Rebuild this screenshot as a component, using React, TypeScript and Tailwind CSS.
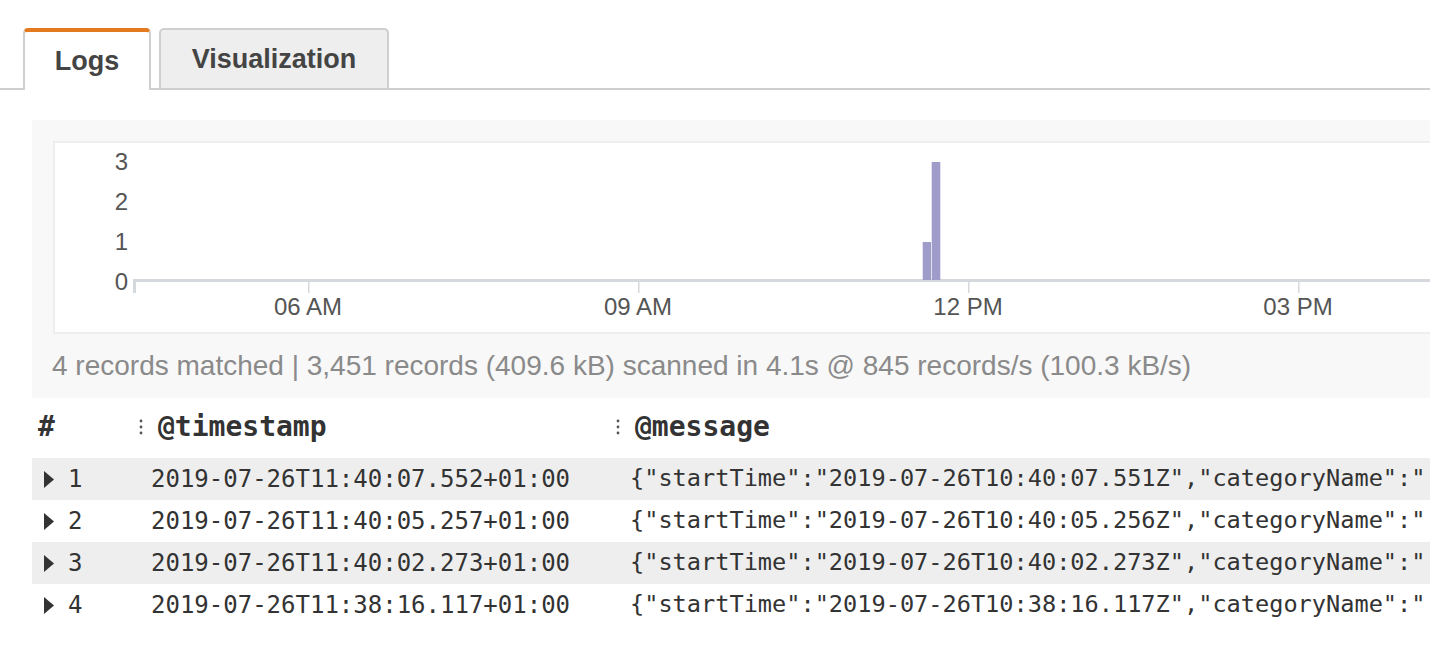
import React from "react";

const rows = [
  { n: 1, ts: "2019-07-26T11:40:07.552+01:00", st: "2019-07-26T10:40:07.551Z" },
  { n: 2, ts: "2019-07-26T11:40:05.257+01:00", st: "2019-07-26T10:40:05.256Z" },
  { n: 3, ts: "2019-07-26T11:40:02.273+01:00", st: "2019-07-26T10:40:02.273Z" },
  { n: 4, ts: "2019-07-26T11:38:16.117+01:00", st: "2019-07-26T10:38:16.117Z" },
];

const ticks = [
  { x: 253, label: "06 AM" },
  { x: 583, label: "09 AM" },
  { x: 913, label: "12 PM" },
  { x: 1243, label: "03 PM" },
];

const Histogram = () => (
  <svg width="1400" height="190" className="block" style={{ fontFamily: '"Liberation Sans", Arial, sans-serif' }}>
    {["3", "2", "1", "0"].map((t, i) => (
      <text key={t} x="73" y={27 + i * 40} textAnchor="end" fontSize="24" fill="#555">
        {t}
      </text>
    ))}
    <rect x="78" y="136" width="1320" height="3" fill="#d5d8dc" />
    <rect x="78" y="136" width="3" height="14" fill="#d5d8dc" />
    {ticks.map((t) => (
      <g key={t.label}>
        <rect x={t.x} y="139" width="1.5" height="11" fill="#d5d8dc" />
        <text x={t.x} y="172" textAnchor="middle" fontSize="24" fill="#555">
          {t.label}
        </text>
      </g>
    ))}
    <rect x="867.7" y="99" width="8.3" height="38" fill="#a09cc9" />
    <rect x="876.7" y="19" width="8.6" height="118" fill="#a09cc9" />
  </svg>
);

const ColGrip = () => (
  <svg width="19" height="20" viewBox="0 0 19 20" className="shrink-0">
    <circle cx="2" cy="4" r="1.4" fill="#555" />
    <circle cx="2" cy="10" r="1.4" fill="#555" />
    <circle cx="2" cy="16" r="1.4" fill="#555" />
  </svg>
);

export default function App() {
  return (
    <div className="w-[1430px] h-[648px] bg-white overflow-hidden" style={{ fontFamily: '"Liberation Sans", Arial, sans-serif' }}>
      {/* tabs */}
      <div className="pt-[28px] pl-[23px] flex items-end border-b-2 border-[#cfcfcf] h-[90px]">
        <div className="w-[128px] h-[62px] -mb-[2px] bg-white border-x-2 border-[#cfcfcf] border-t-[4px] border-t-[#e37a1f] rounded-t-[5px] flex items-center justify-center text-[27px] font-bold text-[#444]">
          Logs
        </div>
        <div className="ml-[8px] w-[230px] h-[60px] bg-[#eeeeee] border-2 border-b-0 border-[#cfcfcf] rounded-t-[5px] flex items-center justify-center text-[27px] font-bold text-[#444]">
          Visualization
        </div>
      </div>

      {/* results panel */}
      <div className="ml-[32px] mt-[30px] bg-[#f8f8f8] pt-[21px] pl-[21px] h-[278px]">
        <div className="h-[193px] bg-white border-2 border-[#eeeeee] border-r-0 overflow-hidden">
          <Histogram />
        </div>
        <div className="pt-[15px] text-[28px] text-[#8a8a8a] leading-[34px] -ml-[1px] whitespace-nowrap">
          4 records matched | 3,451 records (409.6 kB) scanned in 4.1s @ 845 records/s (100.3 kB/s)
        </div>
      </div>

      {/* table */}
      <div className="ml-[32px] text-[#333]" style={{ fontFamily: '"DejaVu Sans Mono", "Liberation Mono", monospace' }}>
        <div className="h-[58px] flex items-center text-[28px] font-bold">
          <div className="w-[107px] pl-[6px]">#</div>
          <div className="w-[477px] flex items-center">
            <ColGrip />
            <span>@timestamp</span>
          </div>
          <div className="flex items-center">
            <ColGrip />
            <span>@message</span>
          </div>
        </div>
        <div className="mt-[2px]">
          {rows.map((r, i) => (
            <div
              key={r.n}
              className={`h-[42px] flex items-center text-[24px] whitespace-nowrap ${i % 2 === 0 ? "bg-[#eeeeee]" : "bg-white"}`}
            >
              <div className="w-[119px] shrink-0 pl-[12px] flex items-center">
                <svg width="11" height="17" viewBox="0 0 11 17" className="mr-[13px] shrink-0">
                  <path d="M0 0 L10 8.5 L0 17 Z" fill="#333" />
                </svg>
                <span>{r.n}</span>
              </div>
              <div className="w-[479px] shrink-0">{r.ts}</div>
              <div className="shrink-0 text-[23.6px]">{`{"startTime":"${r.st}","categoryName":"`}</div>
            </div>
          ))}
        </div>
      </div>
    </div>
  );
}
